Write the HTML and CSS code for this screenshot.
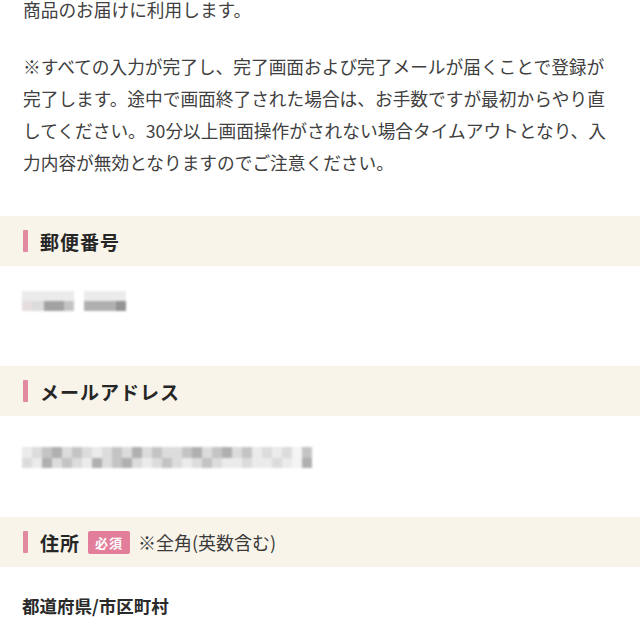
FILE: index.html
```html
<!DOCTYPE html>
<html lang="ja">
<head>
<meta charset="utf-8">
<link rel="stylesheet" href="styles.css">
</head>
<body>
<div class="intro">
  <p class="lead">商品のお届けに利用します。</p>
  <p class="note">※すべての入力が完了し、完了画面および完了メールが届くことで登録が完了します。途中で画面終了された場合は、お手数ですが最初からやり直してください。30分以上画面操作がされない場合タイムアウトとなり、入力内容が無効となりますのでご注意ください。</p>
</div>

<section class="field first">
  <h2 class="band"><span class="title">郵便番号</span></h2>
  <div class="value">
    <div class="mosaic zip">
      <div class="grp g1">
        <div class="row"><i class="c l1 w52"></i></div>
        <div class="row"><i class="c p w10"></i><i class="c l2 w12"></i><i class="c d1 w20"></i><i class="c m1 w10"></i></div>
      </div>
      <div class="grp g2">
        <div class="row"><i class="c l1 w42"></i></div>
        <div class="row"><i class="c m2 w32"></i><i class="c d2 w10"></i></div>
      </div>
    </div>
  </div>
</section>

<section class="field second">
  <h2 class="band"><span class="title">メールアドレス</span></h2>
  <div class="value">
    <div class="mosaic mail">
      <i class="c l1"></i><i class="c l2"></i><i class="c m1"></i><i class="c m2"></i><i class="c l2"></i><i class="c m1"></i><i class="c l2"></i><i class="c l1"></i><i class="c l2"></i><i class="c m1"></i><i class="c l2"></i><i class="c m2"></i><i class="c l2"></i><i class="c m1"></i><i class="c l2"></i><i class="c l2"></i><i class="c m1"></i><i class="c m2"></i><i class="c l2"></i><i class="c m1"></i><i class="c m2"></i><i class="c l2"></i><i class="c m1"></i><i class="c l1"></i><i class="c l2"></i><i class="c l1"></i><i class="c l2"></i><i class="c w0"></i><i class="c m1"></i>
      <i class="c l2"></i><i class="c l1"></i><i class="c m2"></i><i class="c l2"></i><i class="c m1"></i><i class="c l2"></i><i class="c l1"></i><i class="c m2"></i><i class="c l2"></i><i class="c m1"></i><i class="c m2"></i><i class="c l2"></i><i class="c l1"></i><i class="c l2"></i><i class="c m1"></i><i class="c l2"></i><i class="c l1"></i><i class="c l2"></i><i class="c m1"></i><i class="c l2"></i><i class="c l1"></i><i class="c l1"></i><i class="c l2"></i><i class="c l1"></i><i class="c l1"></i><i class="c l2"></i><i class="c l1"></i><i class="c w0"></i><i class="c m2"></i>
    </div>
  </div>
</section>

<section class="field third">
  <h2 class="band"><span class="title">住所</span><span class="badge">必須</span><span class="hint">※全角(英数含む)</span></h2>
  <div class="value">
    <p class="sublabel">都道府県/市区町村</p>
  </div>
</section>
</body>
</html>
```

FILE: styles.css
```css
html, body {
  margin: 0;
  padding: 0;
  background: #fff;
}
body {
  font-family: "Noto Sans CJK JP", "Noto Sans", sans-serif;
  color: #404040;
  overflow: hidden;
}
.intro {
  padding: 0 24px 0 23px;
  margin-top: -7px;
  width: 592px;
}
.intro p {
  margin: 0;
  font-size: 17.7px;
  line-height: 32px;
}
.intro .note {
  margin-top: 25px;
}
.field {
  margin: 0;
}
.first { margin-top: 38px; }
.band {
  margin: 0;
  height: 50px;
  background: #f9f4ea;
  display: flex;
  align-items: center;
  padding-left: 23px;
}
.title {
  display: flex;
  align-items: center;
  font-size: 19px;
  font-weight: 700;
  color: #262626;
  letter-spacing: 1px;
}
.title::before {
  content: "";
  width: 5px;
  height: 22px;
  background: #e28aa2;
  border-radius: 1px;
  margin-right: 12px;
}
.badge {
  margin-left: 8px;
  background: #e27d9a;
  color: #fff;
  font-size: 13px;
  font-weight: 700;
  height: 23px;
  line-height: 23px;
  padding: 0 7px;
  border-radius: 2px;
  letter-spacing: 1px;
}
.hint {
  margin-left: 8px;
  font-size: 18px;
  font-weight: 400;
  color: #3a3a3a;
}
.value {
  padding: 25px 24px 0 22px;
}
.first .value { height: 75px; }
.second .value { padding-top: 31px; height: 70px; }
.third .value { padding-top: 27px; }
.mosaic {
  display: flex;
  filter: blur(0.8px);
}
.zip { gap: 10px; }
.grp { display: flex; flex-direction: column; }
.row { display: flex; height: 10px; }
.c { display: block; height: 10px; }
.w52 { width: 52px; }
.w42 { width: 42px; }
.w32 { width: 32px; }
.w20 { width: 20px; }
.w12 { width: 12px; }
.w10 { width: 10px; }
.l1 { background: #ebebeb; }
.l2 { background: #dcdcdc; }
.m1 { background: #c4c4c4; }
.m2 { background: #b0b0b0; }
.d1 { background: #a2a2a2; }
.d2 { background: #939393; }
.p  { background: #e6dede; }
.w0 { background: #f4f4f4; }
.mail {
  display: grid;
  grid-template-columns: repeat(29, 10px);
  grid-auto-rows: 10.5px;
  width: 291px;
}
.mail .c { height: 10.5px; width: 10px; }
.sublabel {
  margin: 0;
  font-size: 17.5px;
  font-weight: 700;
  color: #2a2a2a;
  line-height: 24px;
}
```
